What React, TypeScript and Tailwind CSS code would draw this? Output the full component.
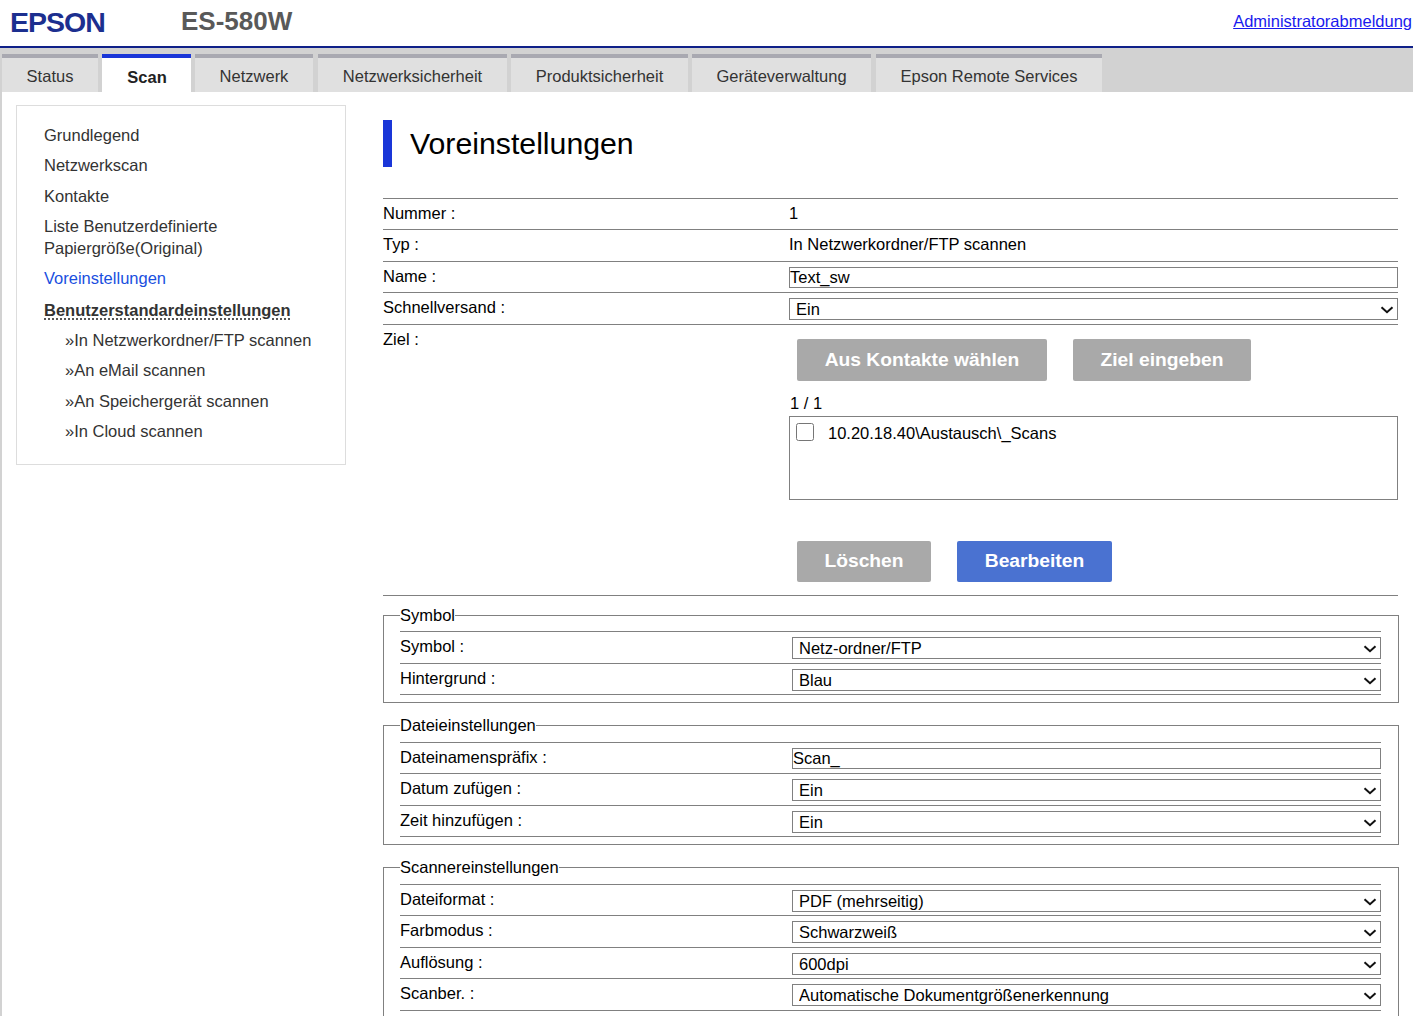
import React from "react";

const tabs = [
  { t: "Status", w: "w-[96px]" },
  { t: "Scan", w: "w-[89px]", active: true },
  { t: "Netzwerk", w: "w-[118px] mr-[1px]" },
  { t: "Netzwerksicherheit", w: "w-[189px]" },
  { t: "Produktsicherheit", w: "w-[177px]" },
  { t: "Geräteverwaltung", w: "w-[179px] mr-[1px]" },
  { t: "Epson Remote Services", w: "w-[226px]" },
];

function Tab({ t, w, active }: { t: string; w: string; active?: boolean }) {
  return (
    <div
      className={`${w} h-[38px] flex items-center justify-center border-t-[4px] ${
        active ? "border-[#1a36d8] bg-white font-bold text-[#222] pt-[4px] pl-[1px]" : "border-[#a9a9b1] bg-[#e0e0e0] text-[#333] pt-[2px]"
      }`}
    >
      {t}
    </div>
  );
}

function Sel({ v }: { v: string }) {
  return (
    <div className="relative w-full">
      <select
        defaultValue={v}
        className="block appearance-none w-full h-[22px] border border-[#808080] bg-white text-black text-[16.5px] leading-[20px] pl-[6px]"
      >
        <option>{v}</option>
      </select>
      <svg className="absolute right-[4px] top-[8px] pointer-events-none" width="14" height="8" viewBox="0 0 14 8" fill="none">
        <path d="M1.5 1.2 7 6.2 12.5 1.2" stroke="#111" strokeWidth="2" />
      </svg>
    </div>
  );
}

function Txt({ v }: { v: string }) {
  return (
    <input
      defaultValue={v}
      className="block w-full h-[21px] border border-[#808080] bg-white text-black text-[16.5px] leading-[19px] px-0 outline-none"
    />
  );
}

function TopRow({ label, h, children }: { label: string; h: string; children: React.ReactNode }) {
  return (
    <div className={`flex ${h} border-b border-[#808080]`}>
      <div className="w-[406px] shrink-0 pt-[3px] leading-[22px]">{label}</div>
      <div className="flex-1 pt-[3px] leading-[22px]">{children}</div>
    </div>
  );
}

function Row({ label, h, w = "w-[392px]", children }: { label: string; h: string; w?: string; children: React.ReactNode }) {
  return (
    <div className={`flex ${h} border-b border-[#808080]`}>
      <div className={`${w} shrink-0 pt-[3px] leading-[22px]`}>{label}</div>
      <div className="flex-1 pt-[5px]">{children}</div>
    </div>
  );
}

function Field({ title, mt, gap, children }: { title: string; mt: string; gap: string; children: React.ReactNode }) {
  return (
    <fieldset className={`${mt} w-[1016px] border border-[#808080] pl-[16px] pr-[17px] pb-[7px]`}>
      <legend className="p-0 leading-[22px] h-[22px]">{title}</legend>
      <div className={`border-t border-[#808080] ${gap}`}>{children}</div>
    </fieldset>
  );
}

function Btn({ cls, children }: { cls: string; children: React.ReactNode }) {
  return (
    <button className={`${cls} rounded-[2px] text-white font-bold text-[19.25px] flex items-center justify-center`}>{children}</button>
  );
}

const Item = ({ children, cls }: { children: React.ReactNode; cls: string }) => <div className={cls}>{children}</div>;

export default function App() {
  return (
    <div className="h-[1016px] w-[1413px] overflow-hidden bg-white text-[16.5px] text-black font-['Liberation_Sans',Arial,sans-serif]">
      <header className="h-[48px] border-b-2 border-[#0f2088] flex items-start">
        <div className="ml-[10px] mt-[4px] w-[171px] text-[28.5px] leading-[36px] font-bold tracking-[-1px] text-[#1c2f8f]">EPSON</div>
        <div className="mt-[3px] text-[26px] leading-[36px] font-bold text-[#595959]">ES-580W</div>
        <a className="ml-auto mr-[1px] mt-[10px] leading-[22px] text-[#1a1aee] underline text-[16.5px]">Administratorabmeldung</a>
      </header>
      <nav className="h-[44px] bg-[#d2d2d2] pl-[2px] pt-[6px] flex gap-[4px]">
        {tabs.map((x) => (
          <Tab key={x.t} {...x} />
        ))}
      </nav>
      <div className="flex border-l-2 border-[#d2d2d2] h-[924px]">
        <aside className="ml-[14px] mt-[13px] w-[330px] h-[360px] border border-[#dddddd] shrink-0 pl-[27px] pt-[18px] text-[#333] leading-[22px]">
          <Item cls="mb-[8.3px]">Grundlegend</Item>
          <Item cls="mb-[8.3px]">Netzwerkscan</Item>
          <Item cls="mb-[8.3px]">Kontakte</Item>
          <Item cls="mb-[8.3px]">
            Liste Benutzerdefinierte
            <br />
            Papiergröße(Original)
          </Item>
          <Item cls="mb-[10px] text-[#1a4fe0]">Voreinstellungen</Item>
          <Item cls="mb-[8.3px] font-bold underline decoration-dotted underline-offset-[2px]">Benutzerstandardeinstellungen</Item>
          <Item cls="mb-[8px] pl-[21px]">»In Netzwerkordner/FTP scannen</Item>
          <Item cls="mb-[8.6px] pl-[21px]">»An eMail scannen</Item>
          <Item cls="mb-[8.3px] pl-[21px]">»An Speichergerät scannen</Item>
          <Item cls="pl-[21px]">»In Cloud scannen</Item>
        </aside>
        <main className="ml-[37px] w-[1016px] flex-1">
          <div className="mt-[28px] h-[47px] border-l-[9px] border-[#1a36d8] pl-[18px] flex items-center text-[30.25px] leading-[44px]">Voreinstellungen</div>
          <div className="mt-[31px] w-[1015px] border-t border-[#808080]">
            <TopRow label="Nummer :" h="h-[31px]">1</TopRow>
            <TopRow label="Typ :" h="h-[32px]">In Netzwerkordner/FTP scannen</TopRow>
            <Row label="Name :" h="h-[31px]" w="w-[406px]"><Txt v="Text_sw" /></Row>
            <Row label="Schnellversand :" h="h-[32px]" w="w-[406px]"><Sel v="Ein" /></Row>
            <div className="flex h-[271px] border-b border-[#808080]">
              <div className="w-[406px] shrink-0 pt-[3px] leading-[22px]">Ziel :</div>
              <div className="flex-1 pt-[14px]">
                <div className="flex gap-[26px] pl-[8px]">
                  <Btn cls="w-[250px] h-[42px] bg-[#a9a9a9]">Aus Kontakte wählen</Btn>
                  <Btn cls="w-[178px] h-[42px] bg-[#a9a9a9]">Ziel eingeben</Btn>
                </div>
                <div className="mt-[11px] mb-[2px] pl-[1px] leading-[22px]">1 / 1</div>
                <div className="h-[84px] border border-[#808080] pl-[6px] pt-[5px] flex items-start gap-[14px]">
                  <input type="checkbox" className="w-[18px] h-[18px] mt-[1px]" />
                  <span className="leading-[22px]">10.20.18.40\Austausch\_Scans</span>
                </div>
                <div className="mt-[41px] flex gap-[26px] pl-[8px]">
                  <Btn cls="w-[134px] h-[41px] bg-[#a9a9a9]">Löschen</Btn>
                  <Btn cls="w-[155px] h-[41px] bg-[#4a72d1]">Bearbeiten</Btn>
                </div>
              </div>
            </div>
          </div>
          <Field title="Symbol" mt="mt-[8px]" gap="mt-[5px]">
            <Row label="Symbol :" h="h-[32px]"><Sel v="Netz-ordner/FTP" /></Row>
            <Row label="Hintergrund :" h="h-[31px]"><Sel v="Blau" /></Row>
          </Field>
          <Field title="Dateieinstellungen" mt="mt-[11px]" gap="mt-[6px]">
            <Row label="Dateinamenspräfix :" h="h-[31px]"><Txt v="Scan_" /></Row>
            <Row label="Datum zufügen :" h="h-[32px]"><Sel v="Ein" /></Row>
            <Row label="Zeit hinzufügen :" h="h-[31px]"><Sel v="Ein" /></Row>
          </Field>
          <Field title="Scannereinstellungen" mt="mt-[11px]" gap="mt-[6px]">
            <Row label="Dateiformat :" h="h-[31px]"><Sel v="PDF (mehrseitig)" /></Row>
            <Row label="Farbmodus :" h="h-[32px]"><Sel v="Schwarzweiß" /></Row>
            <Row label="Auflösung :" h="h-[31px]"><Sel v="600dpi" /></Row>
            <Row label="Scanber. :" h="h-[32px]"><Sel v="Automatische Dokumentgrößenerkennung" /></Row>
          </Field>
        </main>
      </div>
    </div>
  );
}
